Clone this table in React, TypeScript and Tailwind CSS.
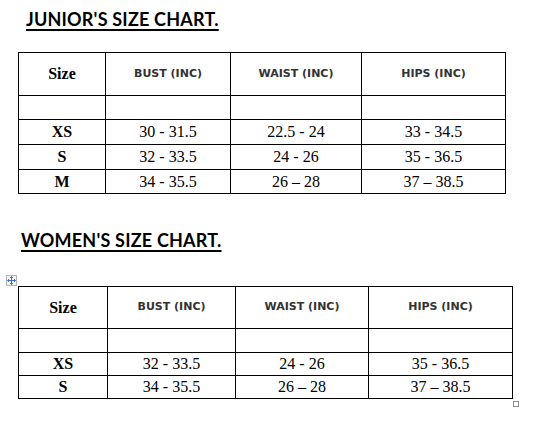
const junior = [
  ["XS", "30 - 31.5", "22.5 - 24", "33 - 34.5"],
  ["S", "32 - 33.5", "24 - 26", "35 - 36.5"],
  ["M", "34 - 35.5", "26 – 28", "37 – 38.5"],
];

const women = [
  ["XS", "32 - 33.5", "24 - 26", "35 - 36.5"],
  ["S", "34 - 35.5", "26 – 28", "37 – 38.5"],
];

const cell = "border border-black text-center p-0";
const serifCell = `${cell} font-['Liberation_Serif','Times_New_Roman',serif] text-[16px] leading-none`;
const headCell = `${cell} font-['DejaVu_Sans',Verdana,sans-serif] font-bold text-[11px] text-[#333]`;
const titleCls =
  "text-[18px] leading-[24px] tracking-[0.2px] font-bold underline underline-offset-[3px] decoration-[2px] text-black font-['Lato','Open_Sans',sans-serif]";

function MoveHandle() {
  return (
    <div className="absolute -left-[12px] -top-[11px] w-[11px] h-[11px] border border-[#b5b5b5] bg-[#f4f4f4] flex items-center justify-center">
      <svg width="9" height="9" viewBox="0 0 9 9" fill="none">
        <path d="M4.5 0.5v8M0.5 4.5h8" stroke="#3b6fd4" strokeWidth="1" />
        <path d="M3 2L4.5 0.5L6 2M3 7L4.5 8.5L6 7M2 3L0.5 4.5L2 6M7 3L8.5 4.5L7 6" stroke="#3b6fd4" strokeWidth="1" />
      </svg>
    </div>
  );
}

function SizeTable({
  rows,
  widths,
  tableW,
  headH,
  rowH,
}: {
  rows: string[][];
  widths: string[];
  tableW: string;
  headH: string;
  rowH: string[];
}) {
  return (
    <table className={`border-collapse table-fixed text-black ${tableW}`}>
      <colgroup>
        {widths.map((w, i) => (
          <col key={i} className={w} />
        ))}
      </colgroup>
      <tbody>
        <tr className={headH}>
          <td className={`${serifCell} font-bold`}>Size</td>
          {["BUST (INC)", "WAIST (INC)", "HIPS (INC)"].map((h) => (
            <td key={h} className={headCell}>
              {h}
            </td>
          ))}
        </tr>
        <tr className="h-[24px]">
          {widths.map((_, i) => (
            <td key={i} className={cell} />
          ))}
        </tr>
        {rows.map((r, ri) => (
          <tr key={ri} className={rowH[ri]}>
            {r.map((c, ci) => (
              <td key={ci} className={ci === 0 ? `${serifCell} font-bold` : serifCell}>
                {c}
              </td>
            ))}
          </tr>
        ))}
      </tbody>
    </table>
  );
}

export default function App() {
  return (
    <div className="w-[546px] h-[432px] bg-white overflow-hidden pt-[7px]">
      <h1 className={`ml-[26px] ${titleCls}`}>JUNIOR'S SIZE CHART.</h1>
      <div className="ml-[18px] mt-[21px]">
        <SizeTable
          rows={junior}
          widths={["w-[87px]", "w-[125px]", "w-[131px]", "w-[144px]"]}
          tableW="w-[488px]"
          headH="h-[43px]"
          rowH={["h-[25px]", "h-[25px]", "h-[24px]"]}
        />
      </div>

      <h1 className={`ml-[21px] mt-[34px] ${titleCls}`}>WOMEN'S SIZE CHART.</h1>
      <div className="ml-[18px] mt-[34px] relative w-fit">
        <MoveHandle />
        <SizeTable
          rows={women}
          widths={["w-[89px]", "w-[128px]", "w-[133px]", "w-[144px]"]}
          tableW="w-[495px]"
          headH="h-[42px]"
          rowH={["h-[23px]", "h-[23px]"]}
        />
        <div className="absolute -right-[6px] -bottom-[8px] w-[6px] h-[6px] border border-[#8a8a8a] bg-white" />
      </div>
    </div>
  );
}
